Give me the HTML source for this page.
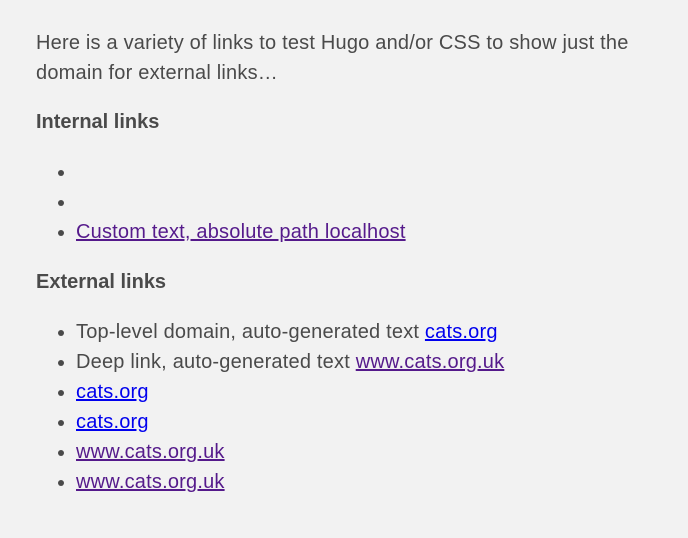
<!DOCTYPE html>
<html><head><meta charset="utf-8"><style>
html,body{margin:0;background:#f2f2f2;width:688px;height:538px;overflow:hidden}
body{font-family:"Liberation Sans",sans-serif;font-size:20px;letter-spacing:0.2px;line-height:30px;color:#4a4a4a;padding:28px 0 0 36px;box-sizing:border-box}
p{margin:0;width:600px}
h4{margin:19px 0 0;font-size:20px;letter-spacing:0;font-weight:bold;line-height:30px}
ul{margin:20px 0 0;padding-left:40px}
li{height:30px}
a{color:#0000ee}
a.v{color:#551a8b}
</style></head><body>
<p>Here is a variety of links to test Hugo and/or CSS to show just the domain for external links…</p>
<h4>Internal links</h4>
<ul><li></li><li></li><li><a class="v" href="#">Custom text, absolute path localhost</a></li></ul>
<h4 style="margin-top:20px">External links</h4>
<ul><li>Top-level domain, auto-generated text <a href="#">cats.org</a></li>
<li>Deep link, auto-generated text <a class="v" href="#">www.cats.org.uk</a></li>
<li><a href="#">cats.org</a></li>
<li><a href="#">cats.org</a></li>
<li><a class="v" href="#">www.cats.org.uk</a></li>
<li><a class="v" href="#">www.cats.org.uk</a></li></ul>
</body></html>
